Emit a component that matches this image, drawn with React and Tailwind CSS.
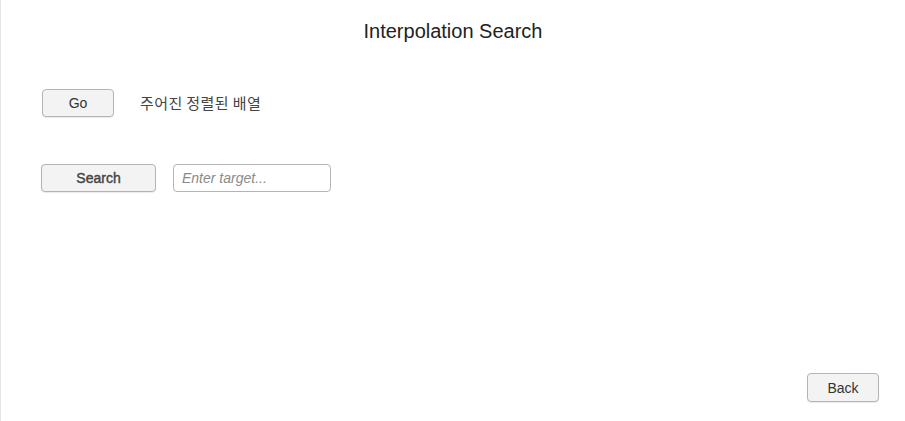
export default function App() {
  const btn =
    "h-[28px] rounded-[4px] border border-[#b4b4b4] bg-[#f3f3f3] text-[14px] text-[#333] shadow-[0_1px_1px_rgba(0,0,0,0.08)]";
  return (
    <div
      className="relative h-[421px] w-full border-l border-[#e6e6e6] bg-white text-[#333]"
      style={{ fontFamily: '"Liberation Sans", Arial, "Noto Sans CJK KR", sans-serif' }}
    >
      <h1 className="pt-[17px] text-center text-[20px] leading-[28px] text-[#222]">Interpolation Search</h1>
      <div className="mt-[44px] flex items-center pl-[41px]">
        <button className={`${btn} w-[72px]`}>Go</button>
        <span
          className="ml-[26px] text-[15px] tracking-[0.4px] text-[#444]"
          style={{ fontFamily: '"Noto Sans CJK KR", sans-serif' }}
        >
          주어진 정렬된 배열
        </span>
      </div>
      <div className="mt-[47px] flex items-center pl-[40px]">
        <button className={`${btn} w-[115px] text-[#444] [-webkit-text-stroke:0.4px_#444]`}>Search</button>
        <input
          className="ml-[17px] h-[28px] w-[158px] rounded-[4px] border border-[#b4b4b4] px-[8px] text-[14px] italic placeholder:text-[#8a8a8a] outline-none"
          placeholder="Enter target..."
        />
      </div>
      <div className="absolute bottom-[19px] right-[26px]">
        <button className={`${btn} w-[72px] h-[29px] pt-[2px]`}>Back</button>
      </div>
    </div>
  );
}
